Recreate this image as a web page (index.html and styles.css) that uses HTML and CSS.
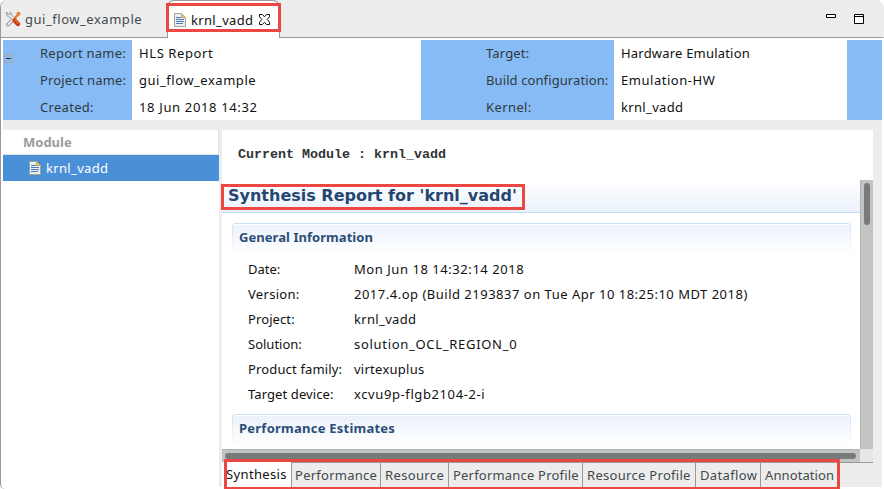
FILE: index.html
```html
<!DOCTYPE html>
<html lang="en">
<head>
<meta charset="utf-8">
<title>HLS Report</title>
<link rel="stylesheet" href="styles.css">
</head>
<body>
<svg width="0" height="0" class="defs">
  <symbol id="doc" viewBox="0 0 12 14">
    <path d="M.5.5h7l4 4v9H.5z" fill="#e6f0fa" stroke="#a9a183"/>
    <path d="M7.5.5v4h4z" fill="#e8c878" stroke="#c9a860"/>
    <path d="M2 4.5h5M2 6.500h8M2 8.500h8M2 10.500h7" stroke="#5279b5"/>
  </symbol>
</svg>
<div class="window">
  <header class="editor-tabs">
    <div class="tab">
      <svg class="tools" width="16" height="16" viewBox="0 0 16 16">
        <path d="M3 13.500 8.500 8" stroke="#888" stroke-width="3.600" stroke-linecap="round"/>
        <path d="M3 13.500 8.500 8" stroke="#eee" stroke-width="1.800" stroke-linecap="round"/>
        <path d="M1.500 1v3l2 2H5l3.500 3.500 2-2L7 4.500V3L5 1v2.500H3z" fill="#eee" stroke="#888" stroke-width=".8"/>
        <path d="m8.500 8 3.500-4.500V2l2-.8 1 1-.8 2-1.200.3L9.500 9z" fill="#f59a28" stroke="#dc5a1c" stroke-width=".9"/>
        <path d="m9.800 9.800 3.200 3.200" stroke="#c83412" stroke-width="4.400" stroke-linecap="round"/>
        <path d="m10 9.200 3.300 3.300" stroke="#f0681c" stroke-width="1.600" stroke-linecap="round"/>
      </svg>
      <span class="t-flow">gui_flow_example</span>
    </div>
    <div class="tab active">
      <svg width="12" height="14"><use href="#doc"/></svg>
      <span class="t-krnl">krnl_vadd</span>
      <svg class="close" width="11" height="11" viewBox="0 0 11 11"><path d="M.5.5h3l2 2.3 2-2.3h3v2.3L8.2 5.5l2.3 2.7v2.3h-3l-2-2.3-2 2.3h-3V8.200l2.300-2.700L.5 2.800z" fill="#fff" stroke="#111"/></svg>
    </div>
    <div class="window-buttons">
      <svg width="10" height="4"><path d="M.5.5h9v3h-9z" fill="#fff" stroke="#000"/></svg>
      <svg width="10" height="10"><path d="M.5.5h9v9h-9zM0 2.500h10" fill="#fff" stroke="#000"/></svg>
    </div>
  </header>

  <section class="info">
    <div class="toggle"></div>
    <div class="names left"><p class="a1">Report name:</p><p class="a2">Project name:</p><p class="a3">Created:</p></div>
    <div class="values"><p class="b1">HLS Report</p><p class="b2">gui_flow_example</p><p class="b3">18 Jun 2018 14:32</p></div>
    <div class="names mid"><p class="c1">Target:</p><p class="c2">Build configuration:</p><p class="c3">Kernel:</p></div>
    <div class="values"><p class="d1">Hardware Emulation</p><p class="d2">Emulation-HW</p><p class="t-krnl">krnl_vadd</p></div>
    <div class="names"></div>
  </section>

  <main class="workspace">
    <aside class="modules">
      <div class="modules-head">Module</div>
      <div class="module-row"><svg width="12" height="14"><use href="#doc"/></svg><span class="t-krnl">krnl_vadd</span></div>
    </aside>
    <section class="report">
      <div class="current">Current Module : krnl_vadd</div>
      <div class="scroller">
        <div class="page">
          <div class="title-band"><h1>Synthesis Report for 'krnl_vadd'</h1></div>
          <h2 class="h-gen">General Information</h2>
          <dl>
            <dt>Date:</dt><dd class="f1">Mon Jun 18 14:32:14 2018</dd>
            <dt class="e2">Version:</dt><dd class="f2">2017.4.op (Build 2193837 on Tue Apr 10 18:25:10 MDT 2018)</dd>
            <dt class="e3">Project:</dt><dd class="t-krnl">krnl_vadd</dd>
            <dt>Solution:</dt><dd class="f4">solution_OCL_REGION_0</dd>
            <dt class="e5">Product family:</dt><dd class="f5">virtexuplus</dd>
            <dt class="e6">Target device:</dt><dd class="f6">xcvu9p-flgb2104-2-i</dd>
          </dl>
          <h2 class="h-perf">Performance Estimates</h2>
        </div>
        <div class="vbar"><i></i></div>
        <div class="hbar"><i></i></div>
        <div class="corner"></div>
        <div class="mark title-mark"></div>
      </div>
      <nav class="pages">
        <span class="p1">Synthesis</span><span class="p2">Performance</span><span class="p3">Resource</span><span class="p4">Performance Profile</span><span class="p5">Resource Profile</span><span class="p6">Dataflow</span><span class="p7">Annotation</span>
        <div class="mark pages-mark"></div>
      </nav>
    </section>
  </main>
  <div class="mark tab-mark"></div>
</div>
</body>
</html>
```
FILE: styles.css
```css
* { box-sizing: border-box; margin: 0; padding: 0; }
body { width: 884px; height: 489px; overflow: hidden; background: #fff; font: 13px/20px "Noto Sans", sans-serif; color: #111; }
svg { display: block; flex: none; }
.defs { position: absolute; }
.window { position: relative; height: 489px; border-left: 1px solid #999; border-radius: 7px 7px 0 5px; overflow: hidden; white-space: nowrap; }
.editor-tabs { display: flex; height: 38px; background: #ededed; border-bottom: 1px solid #999; border-radius: 7px 7px 0 0; border-right: 1px solid #ededed; }
.tab { display: flex; align-items: center; width: 166px; padding-left: 4px; height: 38px; color: #42494b; }
.tab .tools { margin-right: 4px; }
.tab.active { width: 113px; padding-left: 6px; background: #fff; border: 1px solid #999; border-bottom: 0; border-radius: 7px 7px 0 0; color: #111; }
.tab.active .t-krnl { margin-left: 5px; }
.close { margin-left: 6px; }
.window-buttons { display: flex; gap: 18px; margin: 14px 19px 0 auto; }

.info { display: grid; grid-template-columns: 129px 289px 193px 233px 35px; grid-template-rows: 80px; height: 80px; margin: 2px 0 0 2px; position: relative; }
.info p { height: 27px; line-height: 27px; }
.info p:last-child { height: 26px; }
.names { background: #86bbf5; color: #303a40; }
.names.left { padding-left: 37px; }
.names.mid { padding-left: 65px; }
.values { padding-left: 7px; }
.toggle { position: absolute; left: 1px; top: 14px; width: 9px; height: 9px; border: 1px solid #a7a7a7; }
.toggle::after { content: ""; display: block; width: 5px; height: 1px; margin: 3px 1px; background: #333; }

.workspace { display: flex; width: 879px; height: 367px; padding-top: 10px; margin-left: 2px; background: #ededed; }
.modules { width: 216px; background: #fff; margin-right: 3px; }
.modules-head { height: 25px; padding-left: 20px; line-height: 24px; font-weight: 700; color: #999c9d; border-bottom: 1px solid #e2e2e2; border-right: 1px solid #e2e2e2; }
.module-row { display: flex; align-items: center; height: 26px; padding-left: 26px; gap: 5px; color: #fff; background: #4a90d9; }
.report { width: 651px; background: #fff; }
.current { height: 50px; padding-left: 16px; font: 700 13.33px/49px "Liberation Mono", monospace; color: #2e3436; }
.scroller { position: relative; display: grid; grid-template: 269px 13px / 638px 13px; }
.page { overflow: hidden; }
.title-band { height: 33px; padding-left: 6px; background: linear-gradient(#fff, #ebf2fc); border-bottom: 1px solid #c2daf3; }
h1 { font: 700 16px/31px "DejaVu Sans", sans-serif; color: #25476f; }
h2 { height: 31px; margin: 10px 9px 0 10px; padding-left: 6px; font-size: 13px; line-height: 27px; color: #2b4d77; border: 1px solid transparent; border-bottom: 0; border-radius: 4px 4px 0 0; background: linear-gradient(#ebf1fb, #fff) padding-box, linear-gradient(#c8dff7, #fff) border-box; box-shadow: inset 0 1px #fff; }
dl { display: grid; grid-template-columns: 106px 1fr; grid-auto-rows: 25px; padding-left: 26px; margin-top: 3px; line-height: 25px; height: 147px; }
.vbar { padding: 3px 3px 0 3px; background: #c2c4c3; border-left: 1px solid #b2b5b3; }
.vbar i { display: block; width: 6px; height: 42px; border-radius: 3px; background: #777b7b; }
.hbar { padding: 3px 4px 0 3px; background: #c2c4c3; border-top: 1px solid #b2b5b3; }
.hbar i { display: block; height: 6px; border-radius: 3px; background: #777b7b; }
.corner { background: #e6e6e4; }
.pages { position: relative; display: flex; height: 25px; line-height: 24px; background: #ededed; border-top: 1px solid #999; color: #42494b; }
.pages span { border-right: 1px solid #999; padding-left: 4px; height: 24px; }
.pages .p1 { width: 70px; background: #fff; color: #111; margin-top: -1px; line-height: 25px; height: 25px; }
.pages .p2 { width: 89px; padding-left: 3px; } .p3 { width: 68px; } .p4 { width: 134px; } .p5 { width: 113px; } .p6 { width: 65px; } .p7 { width: 78px; }
.mark { position: absolute; border: 3px solid #eb4844; }
.tab-mark { left: 165px; top: 3px; width: 115px; height: 29px; }
.title-mark { left: -1px; top: 4px; width: 304px; height: 26px; }
.pages-mark { left: 2px; top: -4px; width: 616px; height: 31px; }

/* Tracking */
.t-krnl { letter-spacing: .34px; }
.t-flow, .b2, .d2 { letter-spacing: .53px; }
.a1 { letter-spacing: .25px; }
.a2, .c1, .e5 { letter-spacing: .15px; }
.a3, .e2, .p5 { letter-spacing: .3px; }
.b1 { letter-spacing: .6px; }
.b3 { letter-spacing: .65px; }
.c2, .e3, .e6 { letter-spacing: .1px; }
.c3 { letter-spacing: .4px; }
.d1, .p4 { letter-spacing: .2px; }
.h-gen { letter-spacing: .05px; }
.h-perf { letter-spacing: .24px; }
.f1 { letter-spacing: .55px; }
.f2 { letter-spacing: .5px; }
.f4 { letter-spacing: .7px; }
.f5, .p2 { letter-spacing: .26px; }
.f6 { letter-spacing: .6px; }
.p1, .p3, .p6 { letter-spacing: .36px; }
.p7 { letter-spacing: .1px; }
```
